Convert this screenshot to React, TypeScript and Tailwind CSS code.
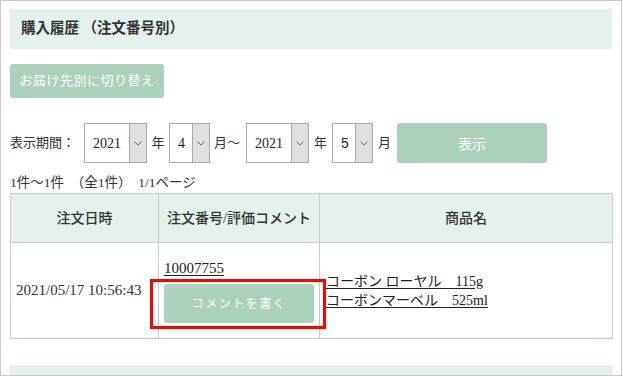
import React from 'react';

const serif = "font-['Liberation_Serif','Noto_Sans_CJK_JP',serif]";

function Chevron() {
  return (
    <svg width="8" height="5" viewBox="0 0 8 5" fill="none">
      <path d="M0.5 0.5 L4 4 L7.5 0.5" stroke="#666" strokeWidth="1" />
    </svg>
  );
}

function FakeSelect({ value, width, sans }: { value: string; width: string; sans?: boolean }) {
  return (
    <div className={`flex h-[40px] ${width} border border-[#a9a9a9] bg-white`}>
      <div
        className={`flex flex-1 items-center pl-[8px] text-[14px] text-[#222] ${
          sans ? "font-['Liberation_Sans',sans-serif]" : ''
        }`}
      >
        {value}
      </div>
      <div className="flex w-[17px] items-center justify-center border-l border-[#a9a9a9] bg-[#e0e0e0]">
        <Chevron />
      </div>
    </div>
  );
}

export default function App() {
  return (
    <div className={`w-[622px] h-[376px] overflow-hidden border border-[#c8c8c8] bg-white px-[9px] pt-[8px] text-[#333] ${serif}`}>
      <div className="flex h-[40px] items-center bg-[#e5f2ec] pl-[11px] text-[14.5px] font-semibold text-[#333]">
        購入履歴 （注文番号別）
      </div>

      <button className="mt-[15px] h-[34px] w-[154px] rounded-[3px] bg-[#abd1bd] text-[13px] tracking-[0.5px] text-white">
        お届け先別に切り替え
      </button>

      <div className="mt-[25px] flex h-[40px] items-center text-[13px]">
        <span className="w-[74px]">表示期間：</span>
        <FakeSelect value="2021" width="w-[63px]" />
        <span className="w-[22px] text-center">年</span>
        <FakeSelect value="4" width="w-[41px]" />
        <span className="w-[36px] pl-[4px]">月～</span>
        <FakeSelect value="2021" width="w-[63px]" />
        <span className="w-[23px] text-center">年</span>
        <FakeSelect value="5" width="w-[41px]" sans />
        <span className="w-[24px] pl-[5px]">月</span>
        <button className="h-[40px] w-[150px] rounded-[3px] bg-[#abd1bd] font-['Noto_Sans_CJK_JP',sans-serif] text-[14px] text-white">
          表示
        </button>
      </div>

      <div className="mt-[10px] h-[20px] text-[13.5px] leading-[20px]">1件～1件　（全1件）　1/1ページ</div>

      <table className="w-[603px] border-collapse border-b border-b-[#a8d2bc] border-t border-t-[#b7d6c7]">
        <thead>
          <tr className="h-[49px] bg-[#e5f2ec] text-[14px] font-medium">
            <th className="w-[148px] border border-[#cccccc] border-t-[#b7d6c7] font-medium">注文日時</th>
            <th className="w-[161px] border border-[#cccccc] border-t-[#b7d6c7] font-medium">注文番号/評価コメント</th>
            <th className="border border-[#cccccc] border-t-[#b7d6c7] font-medium">商品名</th>
          </tr>
        </thead>
        <tbody>
          <tr className="h-[96px]">
            <td className="border border-[#cccccc] border-b-[#a8d2bc] pl-[5px] text-[15px]">2021/05/17 10:56:43</td>
            <td className="border border-[#cccccc] border-b-[#a8d2bc] px-[5px] align-top">
              <div className="relative pt-[15px]">
                <a className="block text-[15px] leading-[20px] text-[#222] underline underline-offset-2">10007755</a>
                <div className="relative mt-[6px]">
                  <button className="h-[39px] w-[150px] rounded-[3px] bg-[#abd1bd] text-[12px] tracking-[1.5px] text-white">
                    コメントを書く
                  </button>
                  <div className="absolute left-[-14px] top-[-5px] h-[50px] w-[176px] border-[3px] border-[#ff0000]" />
                </div>
              </div>
            </td>
            <td className="border border-[#cccccc] border-b-[#a8d2bc] pl-[6px] text-[14px]">
              <div className="flex flex-col items-start leading-[19px] text-[#222]">
                <a className="underline underline-offset-2">コーボン ローヤル　115g</a>
                <a className="underline underline-offset-2">コーボンマーベル　525ml</a>
              </div>
            </td>
          </tr>
        </tbody>
      </table>

      <div className="mt-[26px] h-[20px] w-[603px] bg-[#e5f2ec]" />
    </div>
  );
}
